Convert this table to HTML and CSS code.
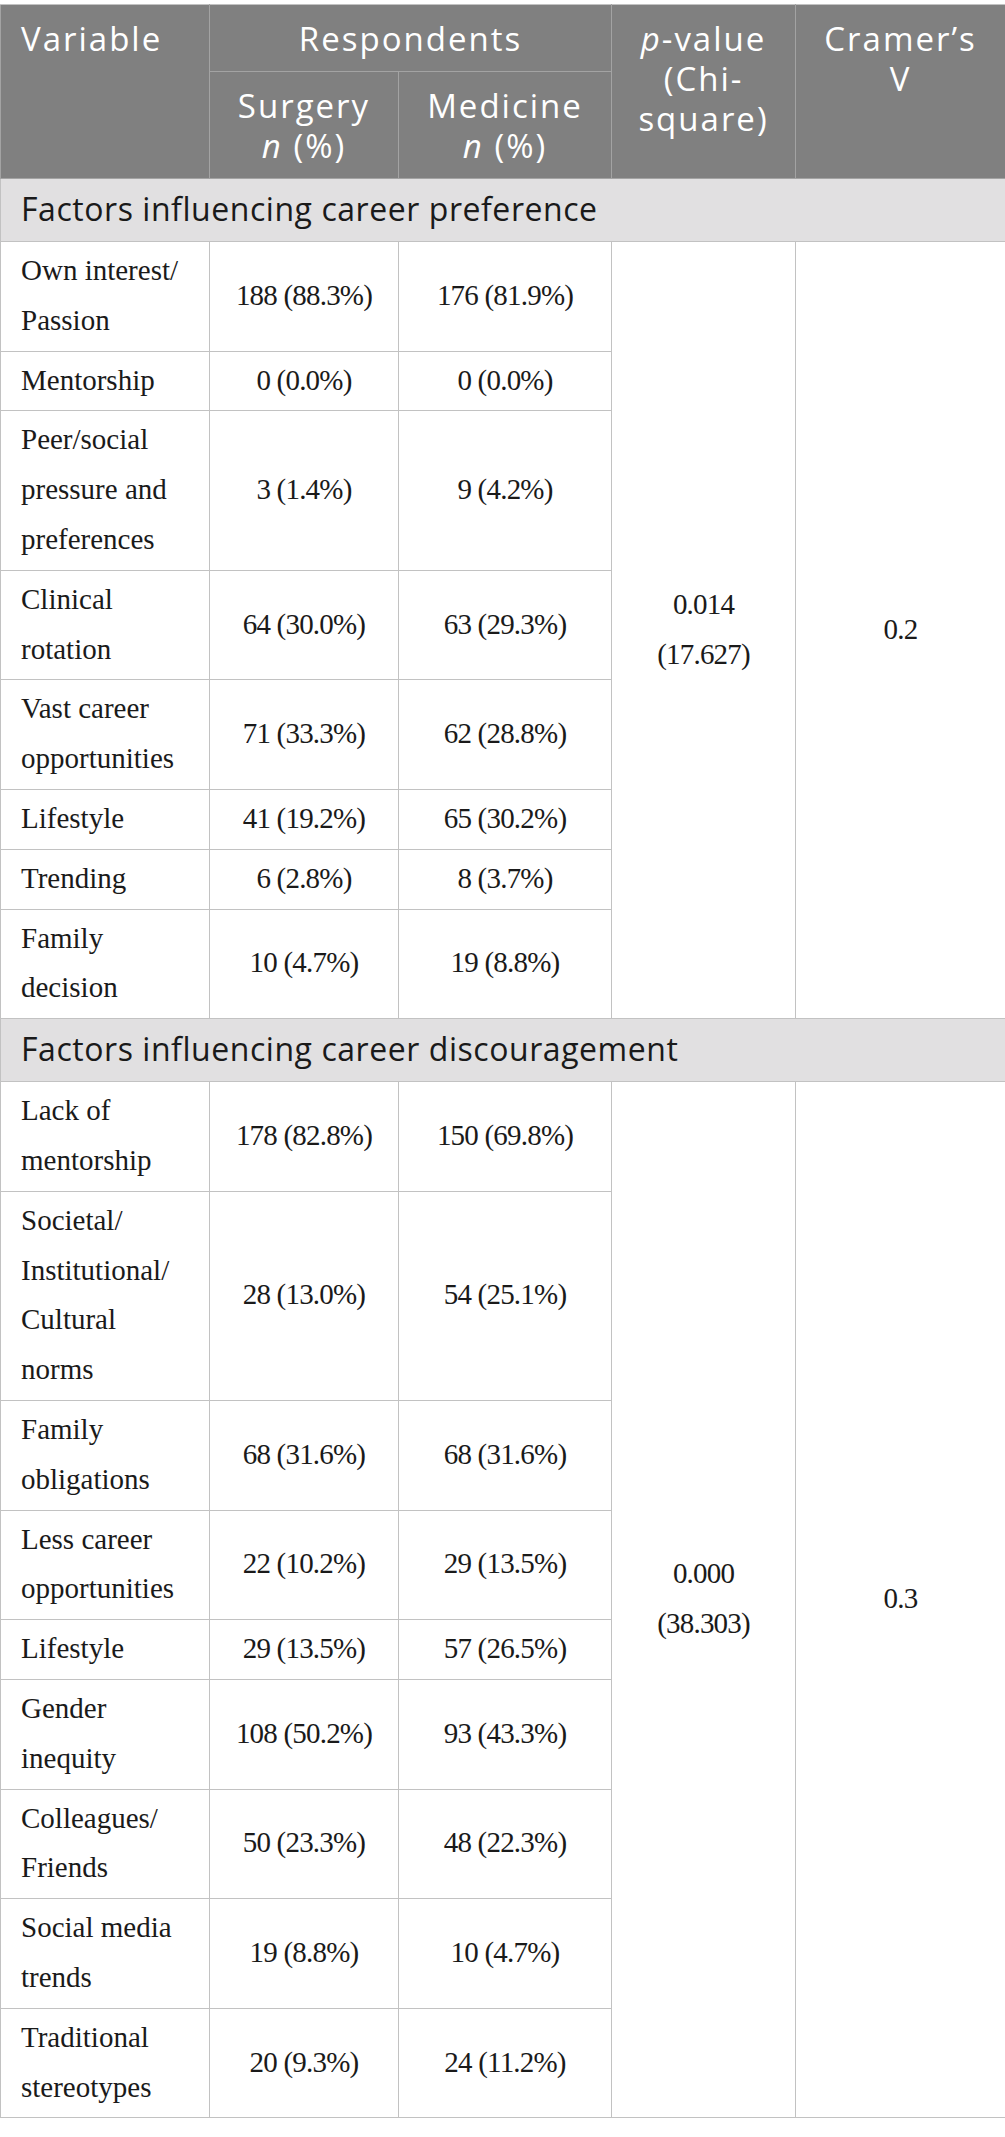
FILE: index.html
```html
<!DOCTYPE html>
<html lang="en">
<head>
<meta charset="utf-8">
<title>Factors influencing career preference and discouragement</title>
<link rel="stylesheet" href="styles.css">
</head>
<body>
<table class="data">
  <colgroup>
    <col class="c1"><col class="c2"><col class="c3"><col class="c4"><col class="c5">
  </colgroup>
  <thead>
    <tr>
      <th rowspan="2" class="h-left">Variable</th>
      <th colspan="2">Respondents</th>
      <th rowspan="2"><i>p</i>-value<br>(Chi-<br>square)</th>
      <th rowspan="2">Cramer’s<br>V</th>
    </tr>
    <tr>
      <th>Surgery<br><i>n</i> (%)</th>
      <th>Medicine<br><i>n</i> (%)</th>
    </tr>
  </thead>
  <tbody>
    <tr class="section"><td colspan="5">Factors influencing career preference</td></tr>
    <tr>
      <td class="var">Own interest/<br>Passion</td><td>188 (88.3%)</td><td>176 (81.9%)</td>
      <td rowspan="8">0.014<br>(17.627)</td><td rowspan="8">0.2</td>
    </tr>
    <tr><td class="var">Mentorship</td><td>0 (0.0%)</td><td>0 (0.0%)</td></tr>
    <tr><td class="var">Peer/social<br>pressure and<br>preferences</td><td>3 (1.4%)</td><td>9 (4.2%)</td></tr>
    <tr><td class="var">Clinical<br>rotation</td><td>64 (30.0%)</td><td>63 (29.3%)</td></tr>
    <tr><td class="var">Vast career<br>opportunities</td><td>71 (33.3%)</td><td>62 (28.8%)</td></tr>
    <tr><td class="var">Lifestyle</td><td>41 (19.2%)</td><td>65 (30.2%)</td></tr>
    <tr><td class="var">Trending</td><td>6 (2.8%)</td><td>8 (3.7%)</td></tr>
    <tr><td class="var">Family<br>decision</td><td>10 (4.7%)</td><td>19 (8.8%)</td></tr>
    <tr class="section"><td colspan="5">Factors influencing career discouragement</td></tr>
    <tr>
      <td class="var">Lack of<br>mentorship</td><td>178 (82.8%)</td><td>150 (69.8%)</td>
      <td rowspan="9">0.000<br>(38.303)</td><td rowspan="9">0.3</td>
    </tr>
    <tr><td class="var">Societal/<br>Institutional/<br>Cultural<br>norms</td><td>28 (13.0%)</td><td>54 (25.1%)</td></tr>
    <tr><td class="var">Family<br>obligations</td><td>68 (31.6%)</td><td>68 (31.6%)</td></tr>
    <tr><td class="var">Less career<br>opportunities</td><td>22 (10.2%)</td><td>29 (13.5%)</td></tr>
    <tr><td class="var">Lifestyle</td><td>29 (13.5%)</td><td>57 (26.5%)</td></tr>
    <tr><td class="var">Gender<br>inequity</td><td>108 (50.2%)</td><td>93 (43.3%)</td></tr>
    <tr><td class="var">Colleagues/<br>Friends</td><td>50 (23.3%)</td><td>48 (22.3%)</td></tr>
    <tr><td class="var">Social media<br>trends</td><td>19 (8.8%)</td><td>10 (4.7%)</td></tr>
    <tr><td class="var">Traditional<br>stereotypes</td><td>20 (9.3%)</td><td>24 (11.2%)</td></tr>
  </tbody>
</table>
</body>
</html>
```

FILE: styles.css
```css
html, body {
  margin: 0;
  padding: 0;
  background: #ffffff;
}

body {
  padding-top: 4px;
}

.data {
  width: 1005px;
  border-collapse: collapse;
  table-layout: fixed;
  font-family: "Liberation Serif", "Times New Roman", serif;
  font-size: 29px;
  line-height: 49.8px;
  color: #1a1a1a;
}

.c1 { width: 209px; }
.c2 { width: 189px; }
.c3 { width: 213px; }
.c4 { width: 184px; }
.c5 { width: 210px; }

.data th {
  background: #808080;
  color: #ffffff;
  font-family: "Open Sans", "Noto Sans", sans-serif;
  font-weight: 400;
  font-size: 33px;
  line-height: 40px;
  letter-spacing: 2px;
  text-align: center;
  vertical-align: top;
  padding: 14px 4px 12px;
  border: 1px solid #a3a3a3;
}

.data thead tr:first-child th {
  border-top-color: #c2c2c2;
}

.data th.h-left {
  text-align: left;
  padding-left: 20px;
}

.data td {
  border: 1px solid #c2c2c2;
  padding: 4px 8px 5px;
  text-align: center;
  vertical-align: middle;
  letter-spacing: -0.8px;
}

.data td.var {
  text-align: left;
  padding-left: 20px;
  letter-spacing: 0;
}

.data tr.section td {
  background: #e1e0e1;
  font-family: "Open Sans", "Noto Sans", sans-serif;
  font-size: 32px;
  line-height: 40px;
  letter-spacing: 0.55px;
  text-align: left;
  padding: 10px 20px 12px;
  color: #1a1a1a;
}
```
